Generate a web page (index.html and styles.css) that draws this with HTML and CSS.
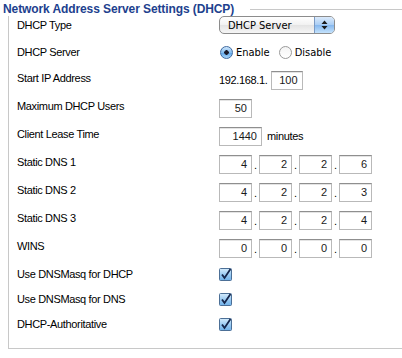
FILE: index.html
```html
<!DOCTYPE html>
<html>
<head>
<meta charset="utf-8">
<link rel="stylesheet" href="styles.css">
</head>
<body>
<section class="panel">
  <div class="head">
    <h2 class="title">Network Address Server Settings (DHCP)</h2>
    <div class="rule"></div>
  </div>
  <div class="box">
    <div class="row r-first">
      <span class="label">DHCP Type</span>
      <div class="value">
        <div class="popup"><span class="popup-text">DHCP Server</span><span class="popup-arrows"><svg width="7" height="10" viewBox="0 0 7 10"><path d="M3.5 0.5 L6.5 4 H0.5 Z M3.5 9.5 L6.5 6 H0.5 Z" fill="#1b1b1b"/></svg></span></div>
      </div>
    </div>
    <div class="row r-radio">
      <span class="label">DHCP Server</span>
      <div class="value aqua">
        <span class="radio on"></span><span class="opt">Enable</span>
        <span class="radio"></span><span class="opt">Disable</span>
      </div>
    </div>
    <div class="row r-input">
      <span class="label lift">Start IP Address</span>
      <div class="value">
        <span class="prefix">192.168.1.</span><span class="field w32">100</span>
      </div>
    </div>
    <div class="row r-input">
      <span class="label lift">Maximum DHCP Users</span>
      <div class="value"><span class="field w33">50</span></div>
    </div>
    <div class="row r-input">
      <span class="label lift">Client Lease Time</span>
      <div class="value"><span class="field w43">1440</span><span class="unit">minutes</span></div>
    </div>
    <div class="row r-input">
      <span class="label lift">Static DNS 1</span>
      <div class="value"><span class="field w33">4</span><span class="dot">.</span><span class="field w33">2</span><span class="dot">.</span><span class="field w33">2</span><span class="dot">.</span><span class="field w33">6</span></div>
    </div>
    <div class="row r-input">
      <span class="label lift">Static DNS 2</span>
      <div class="value"><span class="field w33">4</span><span class="dot">.</span><span class="field w33">2</span><span class="dot">.</span><span class="field w33">2</span><span class="dot">.</span><span class="field w33">3</span></div>
    </div>
    <div class="row r-input">
      <span class="label lift">Static DNS 3</span>
      <div class="value"><span class="field w33">4</span><span class="dot">.</span><span class="field w33">2</span><span class="dot">.</span><span class="field w33">2</span><span class="dot">.</span><span class="field w33">4</span></div>
    </div>
    <div class="row r-input">
      <span class="label lift">WINS</span>
      <div class="value"><span class="field w33">0</span><span class="dot">.</span><span class="field w33">0</span><span class="dot">.</span><span class="field w33">0</span><span class="dot">.</span><span class="field w33">0</span></div>
    </div>
    <div class="row r-check">
      <span class="label">Use DNSMasq for DHCP</span>
      <div class="value"><span class="check"><svg width="13" height="13" viewBox="0 0 13 13"><defs><linearGradient id="cg" x1="0" y1="0" x2="0" y2="1"><stop offset="0" stop-color="#d6ecfc"/><stop offset="0.5" stop-color="#9ccbf2"/><stop offset="1" stop-color="#6fb1ea"/></linearGradient></defs><rect x="0.5" y="0.5" width="12" height="12" rx="1" fill="url(#cg)" stroke="#4c6f96"/><path d="M3 6.5 L5.5 10 L11.5 1" fill="none" stroke="#15254a" stroke-width="1.8"/></svg></span></div>
    </div>
    <div class="row r-check">
      <span class="label">Use DNSMasq for DNS</span>
      <div class="value"><span class="check"><svg width="13" height="13" viewBox="0 0 13 13"><rect x="0.5" y="0.5" width="12" height="12" rx="1" fill="url(#cg)" stroke="#4c6f96"/><path d="M3 6.5 L5.5 10 L11.5 1" fill="none" stroke="#15254a" stroke-width="1.8"/></svg></span></div>
    </div>
    <div class="row r-check">
      <span class="label">DHCP-Authoritative</span>
      <div class="value"><span class="check"><svg width="13" height="13" viewBox="0 0 13 13"><rect x="0.5" y="0.5" width="12" height="12" rx="1" fill="url(#cg)" stroke="#4c6f96"/><path d="M3 6.5 L5.5 10 L11.5 1" fill="none" stroke="#15254a" stroke-width="1.8"/></svg></span></div>
    </div>
  </div>
</section>
</body>
</html>
```
FILE: styles.css
```css
html, body {
  margin: 0;
  padding: 0;
  background: #fff;
}
body {
  font-family: "Liberation Sans", Arial, sans-serif;
  font-size: 11px;
  color: #000;
}
.panel {
  margin: 3px 0 0 3px;
}
.head {
  display: flex;
  align-items: center;
  height: 13px;
}
.title {
  margin: 0;
  padding-right: 16px;
  font-size: 12px;
  line-height: 13px;
  font-weight: bold;
  letter-spacing: -0.1px;
  color: #213f8e;
  white-space: nowrap;
}
.rule {
  flex: 1;
  border-top: 1px solid #c8c8c8;
}
.box {
  margin-left: 5px;
  border-left: 1px solid #c8c8c8;
  border-bottom: 1px solid #c8c8c8;
  padding: 0 0 11px 8px;
}
.row {
  display: grid;
  grid-template-columns: 202px auto;
  align-items: center;
}
.r-first { height: 18px; margin-bottom: 5px; }
.r-radio { height: 27px; }
.r-input { height: 28px; }
.r-check { height: 25px; }
.label {
  letter-spacing: -0.35px;
  line-height: 13px;
  white-space: nowrap;
}
.lift { margin-bottom: 3px; }
.value {
  display: flex;
  align-items: center;
  letter-spacing: -0.35px;
}
.popup {
  display: flex;
  align-items: center;
  width: 116px;
  height: 18px;
  box-sizing: border-box;
  border: 1px solid #8c8c8c;
  border-radius: 5px;
  overflow: hidden;
  background: linear-gradient(#ffffff, #f1f1f1 50%, #e3e3e3 51%, #f6f6f6);
  font-family: "DejaVu Sans Condensed", "DejaVu Sans", sans-serif;
  font-size: 11px;
  letter-spacing: 0;
}
.popup-text {
  flex: 1;
  padding-left: 8px;
}
.popup-arrows {
  width: 19px;
  height: 100%;
  display: flex;
  align-items: center;
  justify-content: center;
  border-left: 1px solid #7a9ac4;
  background: linear-gradient(#dbeafb, #a9cdf4 50%, #85b7ee 51%, #c4e2fc);
}
.aqua {
  font-family: "DejaVu Sans Condensed", "DejaVu Sans", sans-serif;
  letter-spacing: 0;
}
.radio {
  width: 13px;
  height: 13px;
  box-sizing: border-box;
  border-radius: 50%;
  border: 1px solid #9a9a9a;
  background: linear-gradient(#f4f4f4, #ffffff);
  margin-left: 1px;
}
.radio.on {
  border-color: #3f6aa0;
  background: radial-gradient(circle at 50% 50%, #1a1a2a 0, #1a1a2a 2px, transparent 2.5px),
              linear-gradient(#cfe6fb, #84bdf0 50%, #5aa2e8 51%, #a8d6fb);
}
.opt { margin: 0 8px 0 3px; }
.prefix { margin-right: 3px; }
.field {
  display: inline-flex;
  align-items: center;
  justify-content: flex-end;
  box-sizing: border-box;
  height: 19px;
  padding-right: 4px;
  border: 1px solid #b9b9b9;
  border-top-color: #8f8f8f;
  box-shadow: inset 0 1px 0 #e4e4e4;
  background: #fff;
  color: #1a1a1a;
  letter-spacing: 0;
}
.w32 { width: 32px; }
.w33 { width: 33px; }
.w43 { width: 43px; }
.unit { margin-left: 5px; }
.dot {
  width: 7px;
  text-align: center;
  letter-spacing: 0;
  align-self: flex-end;
  line-height: 17px;
}
.check {
  display: flex;
  width: 13px;
  height: 13px;
}
```
